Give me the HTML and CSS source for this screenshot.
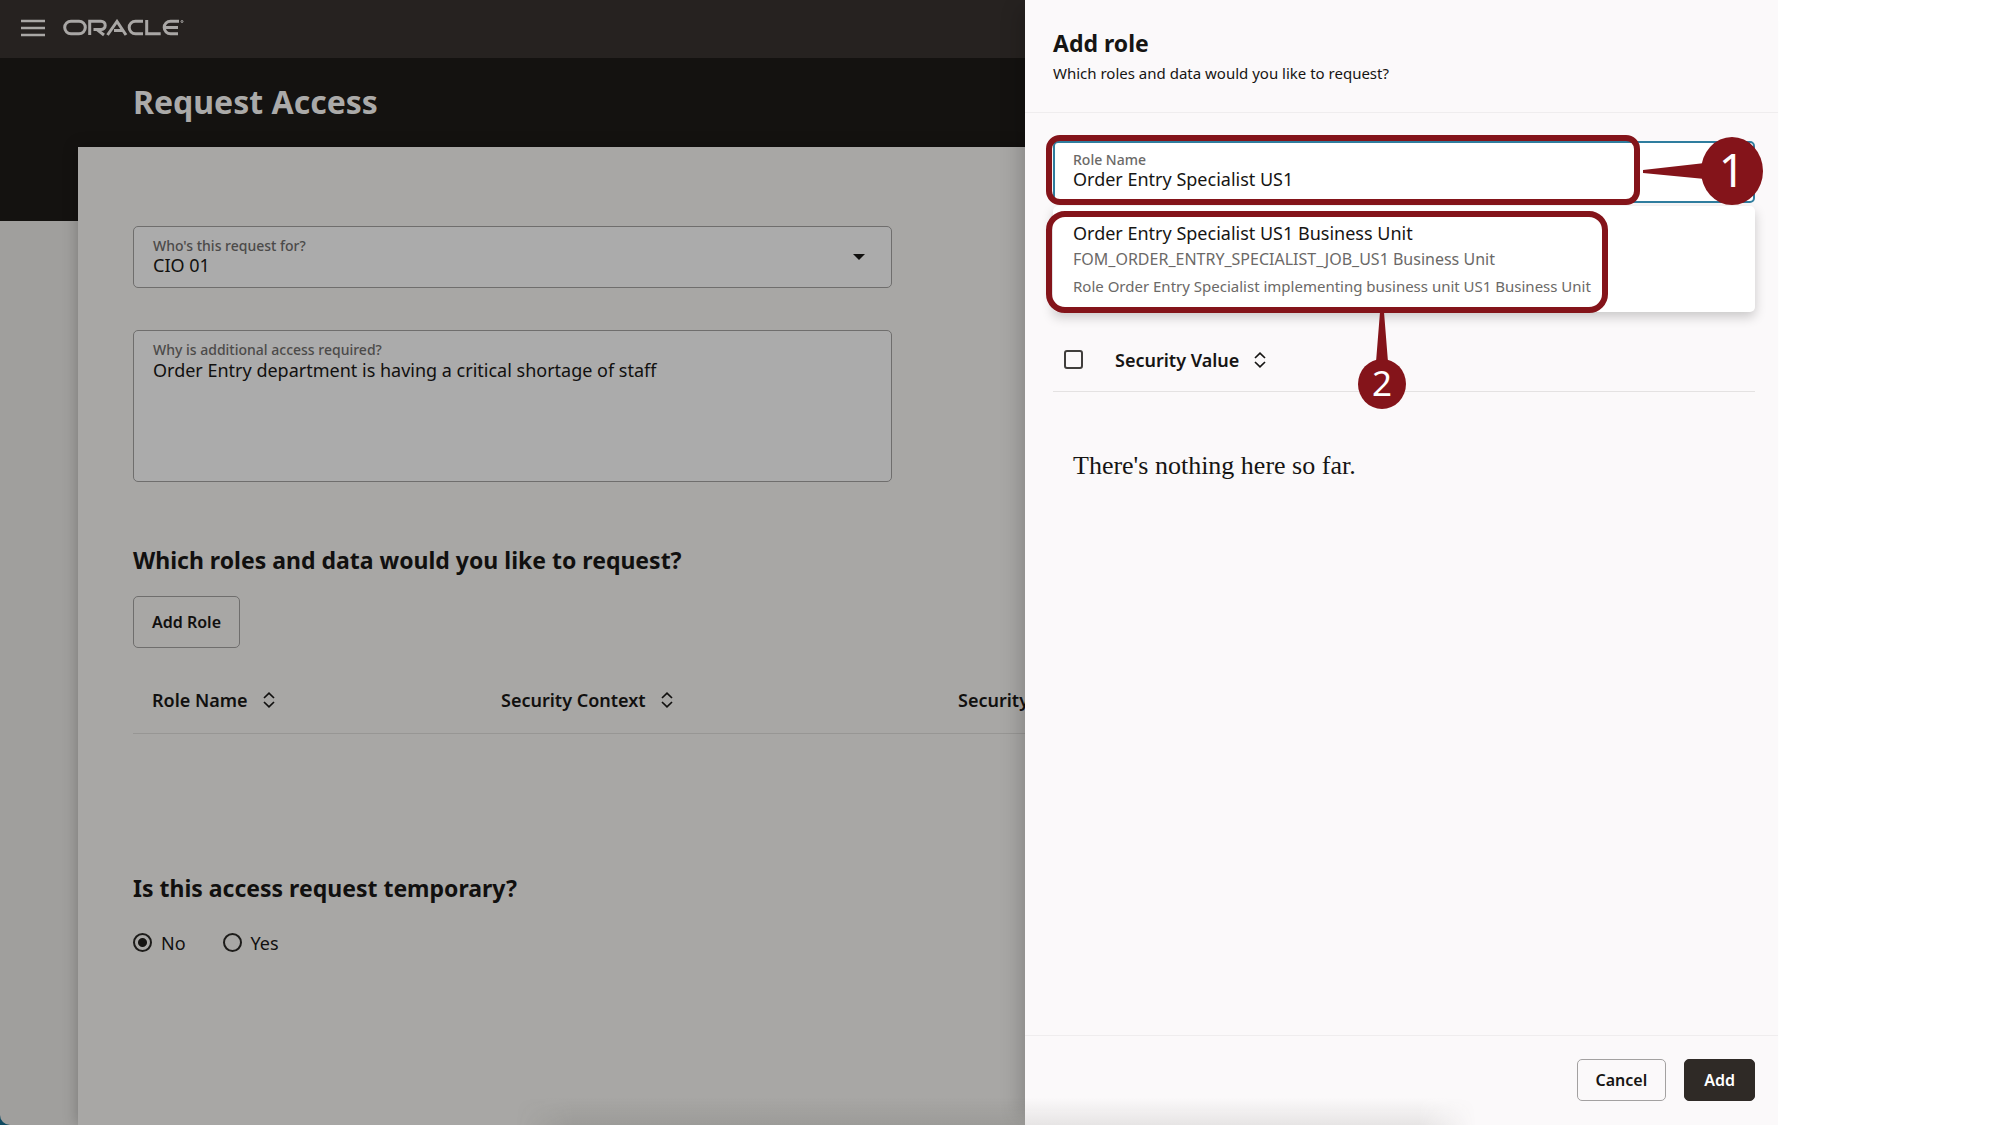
FILE: index.html
```html
<!DOCTYPE html>
<html lang="en">
<head>
<meta charset="utf-8">
<title>Request Access</title>
<link rel="stylesheet" href="styles.css">
</head>
<body>
<svg class="defs" aria-hidden="true">
  <symbol id="sort" viewBox="0 0 12 16"><path d="M1 6 6 1.200 11 6M1 10 6 14.800 11 10" fill="none" stroke="currentColor" stroke-width="1.700"/></symbol>
</svg>
<div class="window">
  <div class="page">
    <header class="topbar">
      <button class="menu" type="button" aria-label="Menu">
        <svg width="24" height="18" viewBox="0 0 24 18"><path d="M0 2h24M0 9h24M0 16h24" stroke="currentColor" stroke-width="2.400"/></svg>
      </button>
      <a class="logo" href="#" aria-label="Oracle">
        <svg width="122" height="18" viewBox="0 0 122 18" fill="none" stroke="currentColor" stroke-width="3">
          <path d="M8 2.200h8a6.300 6.300 0 0 1 0 12.600H8A6.300 6.300 0 0 1 8 2.200Z"/>
          <path d="M26.700 16V2.200h11.300a4.200 4.200 0 0 1 0 8.400H30.500M34 10.600l7 5.400"/>
          <path d="M44.500 16 54 2.500 63 16M51 11.500h9"/>
          <path d="M80 2.200h-7.500a6.300 6.300 0 0 0 0 12.600H80"/>
          <path d="M83.700 1v13.800h14"/>
          <path d="M116 2.200h-8.500a6.300 6.300 0 0 0 0 12.600H115M102 8.500h13"/>
          <circle cx="119" cy="2.500" r="1" stroke-width="1"/>
        </svg>
      </a>
    </header>
    <div class="hero"><h1>Request Access</h1></div>
    <main class="card">
      <div class="field">
        <label for="who">Who's this request for?</label>
        <select id="who"><option>CIO 01</option></select>
        <svg class="caret" width="12" height="6" viewBox="0 0 12 6"><path d="M0 0h12L6 6Z" fill="currentColor"/></svg>
      </div>
      <div class="field field-area">
        <label for="why">Why is additional access required?</label>
        <textarea id="why">Order Entry department is having a critical shortage of staff</textarea>
      </div>
      <section class="roles">
        <h2>Which roles and data would you like to request?</h2>
        <button class="btn btn-tall" type="button">Add Role</button>
        <table>
          <thead><tr>
            <th class="col-role"><span>Role Name <svg width="12" height="16"><use href="#sort"/></svg></span></th>
            <th class="col-context"><span>Security Context <svg width="12" height="16"><use href="#sort"/></svg></span></th>
            <th><span>Security Value <svg width="12" height="16"><use href="#sort"/></svg></span></th>
          </tr></thead>
        </table>
      </section>
      <section class="temporary">
        <h2>Is this access request temporary?</h2>
        <div class="radios">
          <label><input type="radio" name="temp" checked>No</label>
          <label><input type="radio" name="temp">Yes</label>
        </div>
      </section>
    </main>
  </div>
  <aside class="drawer">
    <header class="drawer-head">
      <h2>Add role</h2>
      <p>Which roles and data would you like to request?</p>
    </header>
    <div class="drawer-body">
      <div class="field field-active">
        <label for="role">Role Name</label>
        <input id="role" type="text" value="Order Entry Specialist US1">
      </div>
      <ul class="options">
        <li>
          <strong>Order Entry Specialist US1 Business Unit</strong>
          <span>FOM_ORDER_ENTRY_SPECIALIST_JOB_US1 Business Unit</span>
          <span class="desc">Role Order Entry Specialist implementing business unit US1 Business Unit</span>
        </li>
      </ul>
      <table class="values">
        <thead><tr>
          <th class="col-check"><input type="checkbox" aria-label="Select all"></th>
          <th><span>Security Value <svg width="12" height="16"><use href="#sort"/></svg></span></th>
        </tr></thead>
      </table>
      <p class="empty">There's nothing here so far.</p>
    </div>
    <footer class="drawer-foot">
      <button class="btn" type="button">Cancel</button>
      <button class="btn btn-primary" type="button">Add</button>
    </footer>
    <svg class="callouts" width="753" height="420" viewBox="0 0 753 420">
      <g fill="none" stroke="#84141a" stroke-width="6">
        <rect x="24" y="138" width="588" height="64" rx="11"/>
        <rect x="24" y="214" width="556" height="96" rx="16"/>
      </g>
      <g fill="#84141a">
        <path d="M618 170 680 163v16l-62-6ZM355 312h4l4 50h-12Z"/>
        <ellipse cx="707" cy="171" rx="31" ry="34"/>
        <ellipse cx="357" cy="384" rx="24" ry="25"/>
      </g>
      <text class="callout-num large" x="707" y="187">1</text>
      <text class="callout-num" x="357" y="396">2</text>
    </svg>
  </aside>
</div>
</body>
</html>
```
FILE: styles.css
```css
* { box-sizing: border-box; }
body {
  margin: 0;
  background: #fff;
  color: #161513;
  font-family: "Noto Sans", "Open Sans", sans-serif;
  font-size: 18px;
}
h1, h2, p, ul { margin: 0; padding: 0; }
button, input, select, textarea { font: inherit; color: inherit; }
.defs { position: absolute; width: 0; height: 0; }

.window {
  position: relative;
  display: grid;
  grid-template-columns: 1025fr 753fr;
  width: 88.9%;
  min-height: 100vh;
  background: linear-gradient(90deg, #0f4a61 50%, #fff 50%);
}
/* soft shade along the bottom edge of the window */
.window::after {
  content: "";
  position: absolute;
  left: 29%;
  right: 17%;
  bottom: 0;
  height: 28px;
  background: linear-gradient(transparent, rgba(60, 60, 50, .1));
  mask-image: linear-gradient(90deg, transparent, #000 6%, #000 94%, transparent);
  pointer-events: none;
}
.page {
  display: flex;
  flex-direction: column;
  min-width: 0;
  overflow: hidden;
  background: #a09f9d;
  color: #11100f;
  border-bottom-left-radius: 10px;
}

.topbar {
  display: flex;
  align-items: center;
  gap: 18px;
  height: 58px;
  padding: 0 21px 2px;
  background: #262220;
  color: #a9a7a5;
}
.menu { display: flex; padding: 0; border: 0; background: none; }
.logo { display: flex; color: inherit; }
.hero {
  height: 163px;
  padding: 20px 0 0 133px;
  background: #141210;
  color: #abaaa9;
}
h1 { font-size: 32px; line-height: 48px; font-weight: 700; }

.card {
  flex: 1;
  margin: -74px 0 0 78px;
  padding: 79px 0 0 55px;
  background: #a8a7a5;
  box-shadow: 0 0 14px rgba(0, 0, 0, .25);
}
.field {
  position: relative;
  display: flex;
  flex-direction: column;
  width: 759px;
  max-width: 100%;
  height: 62px;
  padding: 11px 19px 8px;
  border: 1px solid #6f6e6d;
  border-radius: 5px;
  background: #ababab;
}
.field label { font-size: 14px; line-height: 16px; font-weight: 500; color: #4b4a49; }
.field select, .field input, .field textarea {
  width: 100%;
  padding: 0;
  border: 0;
  outline: 0;
  background: none;
  line-height: 22px;
  resize: none;
  appearance: none;
}
.field select, .field input { height: 22px; }
.caret { position: absolute; right: 26px; top: 27px; }
.field-area { height: 152px; margin-top: 42px; }
.field-area textarea { flex: 1; padding-top: 1px; }

h2 { font-size: 23px; line-height: 34px; font-weight: 700; }
.roles { padding-top: 61px; }
.btn {
  height: 42px;
  padding: 0 18px;
  border: 1px solid #a3a1a1;
  border-radius: 5px;
  background: none;
  font-size: 16px;
  font-weight: 600;
}
.btn-tall { height: 52px; margin-top: 19px; border-color: #6f6e6d; }
table { border-collapse: collapse; width: 100%; }
th {
  height: 65px;
  padding: 0 19px;
  border-bottom: 1px solid #979694;
  text-align: left;
  font-weight: 600;
  white-space: nowrap;
}
th span { display: inline-flex; align-items: center; gap: 15px; }
.roles table { width: 1400px; margin-top: 20px; }
.col-role { width: 349px; }
.col-context { width: 457px; }

.temporary { padding-top: 137px; }
.radios { display: flex; gap: 37px; margin-top: 25px; }
.radios label { display: flex; align-items: center; gap: 9px; line-height: 26px; }
input[type="radio"], input[type="checkbox"] {
  appearance: none;
  width: 19px;
  height: 19px;
  margin: 0;
  border: 2px solid #1d1c1a;
}
input[type="radio"] { border-radius: 50%; }
input[type="radio"]:checked { background: radial-gradient(circle, #161513 4px, transparent 5px); }
input[type="checkbox"] { display: block; border-radius: 3px; border-color: #403e3c; }

.drawer {
  position: relative;
  display: flex;
  flex-direction: column;
  background: #fbf9fa;
  box-shadow: -12px 0 20px -8px rgba(0, 0, 0, .2);
}
.drawer-head { height: 113px; padding: 26px 28px 0; border-bottom: 1px solid #efedee; }
.drawer-head p { font-size: 15px; line-height: 26px; }
.drawer-body { flex: 1; padding: 28px 23px 0 28px; }
.field-active { width: auto; border: 2px solid #2f7d9e; background: #fff; padding: 9px 18px 8px; }
.field-active label { color: #6b6967; }
.options {
  height: 106px;
  margin-top: 3px;
  padding: 13px 20px;
  border-radius: 5px;
  background: #fff;
  box-shadow: 0 5px 12px rgba(0, 0, 0, .2);
  list-style: none;
}
.options li { display: flex; flex-direction: column; }
.options strong { font-weight: 400; line-height: 28px; }
.options span { font-size: 16px; line-height: 24px; color: #6b6967; }
.options .desc { overflow: hidden; white-space: nowrap; font-size: 15px; line-height: 30px; }
.values { margin-top: 17px; }
.values th { height: 62px; border-color: #e4e2e2; padding: 0; }
.values .col-check { width: 62px; padding-left: 11px; }
.empty {
  padding: 54px 20px;
  font-family: "Liberation Serif", Georgia, serif;
  font-size: 26px;
  line-height: 40px;
}
.drawer-foot {
  display: flex;
  justify-content: flex-end;
  gap: 18px;
  padding: 23px 23px 24px;
  border-top: 1px solid #efedee;
}
.btn-primary { padding: 0 19px; border-color: #2f2a26; background: #2f2a26; color: #fff; }

.callouts { position: absolute; left: 0; top: 0; overflow: visible; pointer-events: none; }
.callout-num {
  fill: #fff;
  font-size: 35px;
  text-anchor: middle;
}
.callout-num.large { font-size: 46px; }
```
